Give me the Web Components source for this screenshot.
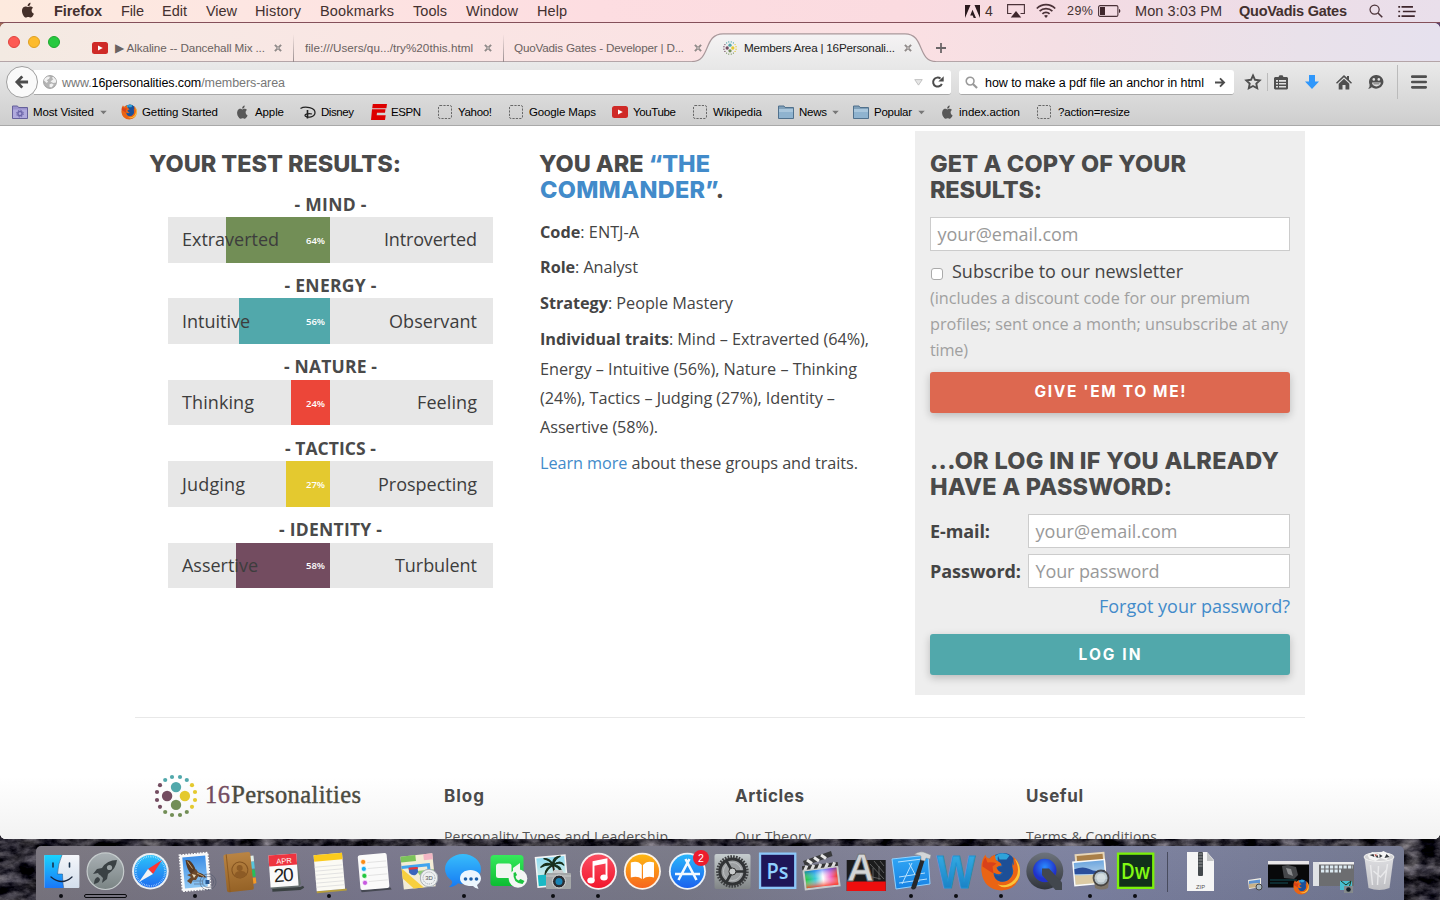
<!DOCTYPE html>
<html lang="en">
<head>
<meta charset="utf-8">
<title>Members Area | 16Personalities</title>
<style>
html,body{margin:0;height:100%;overflow:hidden}
body{font-family:"Liberation Sans",Arial,sans-serif}
</style>
</head>
<body>
<mac-desktop></mac-desktop>
<script>
const SVG={
apple:`<svg viewBox="0 0 14 17"><path fill="currentColor" d="M11.4 9c0-1.900 1.500-2.700 1.600-2.800-.9-1.300-2.200-1.500-2.700-1.500-1.200-.1-2.300.7-2.900.7s-1.500-.7-2.500-.7C3.600 4.700 2.400 5.500 1.700 6.600.3 9 1.300 12.600 2.700 14.600c.7 1 1.500 2 2.500 2s1.400-.6 2.600-.6 1.500.6 2.600.6 1.700-1 2.400-1.900c.7-1.100 1-2.200 1.100-2.200-.1-.1-2.500-1-2.500-3.500zM9.500 3.300C10 2.600 10.400 1.700 10.300.7c-.8 0-1.800.5-2.300 1.200-.5.6-1 1.500-.9 2.500.9 0 1.800-.5 2.400-1.100z"/></svg>`,
adobe:`<svg viewBox="0 0 15 13"><path fill="#2a1a1e" d="M0 0h5.500L0 13zM9.500 0H15v13zM7.500 4.800L11 13H8.700l-1-2.600H5.200z"/></svg>`,
airplay:`<svg viewBox="0 0 18 14"><path fill="none" stroke="#4a3238" stroke-width="1.100" d="M4.500 9.500H.6V.6h16.800v8.900h-3.900"/><path fill="#3e262c" d="M9 7l5.200 6.500H3.800z"/></svg>`,
wifi:`<svg viewBox="0 0 20 15"><g fill="none" stroke="#4a3238" stroke-width="1.700"><path d="M.8 5.500a13 13 0 0 1 18.400 0M3.600 8.200a9 9 0 0 1 12.800 0M6.400 10.900a5 5 0 0 1 7.200 0"/></g><path fill="#4a3238" d="M10 15l-2-2.200a3 3 0 0 1 4 0z"/></svg>`,
battery:`<svg viewBox="0 0 24 12"><rect x=".6" y=".6" width="19.300" height="10.800" rx="1.500" fill="none" stroke="#4a3238" stroke-width="1.100"/><path fill="#3e262c" d="M2 2h5v8H2zM21 4c1.800.3 1.800 3.700 0 4z"/></svg>`,
spot:`<svg viewBox="0 0 15 15"><circle cx="6" cy="6" r="4.900" fill="none" stroke="#4a3238" stroke-width="1.300"/><path d="M9.600 9.600l4.600 4.600" stroke="#4a3238" stroke-width="1.700"/></svg>`,
list:`<svg viewBox="0 0 19 12"><path d="M0 1h2M0 6h2M0 11h2M3.500 1H16M5 6h14M3.500 11H18" stroke="#3e262c" stroke-width="1.900"/></svg>`,
yt:`<svg viewBox="0 0 16 12"><rect width="16" height="12" rx="2.500" fill="#cf2a27"/><path fill="#fff" d="M6 3.500l4.800 2.500L6 8.500z"/></svg>`,
x:`<svg viewBox="0 0 9 9"><path d="M1 1l7 7M8 1L1 8" stroke="#8f8a89" stroke-width="2.200"/><path d="M4.500 3.500v2M3.500 4.500h2" stroke="#d8d0ce" stroke-width=".8"/></svg>`,
plus:`<svg viewBox="0 0 10 10"><path d="M5 0v10M0 5h10" stroke="#6b6668" stroke-width="1.800"/></svg>`,
globe:`<svg viewBox="0 0 15 15"><circle cx="7.500" cy="7.500" r="6.900" fill="#b5b5b5" stroke="#909090" stroke-width=".8"/><path fill="#f1f1f1" d="M2 3.500L5 1.500l2.500.5L6.500 4 4 5.500 5.500 7 4 8.500 1 6zM8 7l3-2.500L9.500 3 11 2l2.800 3 .3 3-3.100.5zM7 10l2.500-1 2 1.500L9 13.500 7 12.500z"/></svg>`,
back:`<svg viewBox="0 0 15 14"><path d="M7.800 1L2 7l5.800 6M2 7h12" fill="none" stroke="#4c4c4c" stroke-width="3"/></svg>`,
drop:`<svg viewBox="0 0 10 8"><path d="M.7.7h8.600L5 7z" fill="#e6e6e6" stroke="#bbb"/></svg>`,
reload:`<svg viewBox="0 0 12 12"><path d="M9.800 7.800A4.500 4.500 0 1 1 8.500 2.600" fill="none" stroke="#4c4c4c" stroke-width="2"/><path d="M6.300 5.600h5.400V.3z" fill="#4c4c4c"/></svg>`,
find:`<svg viewBox="0 0 14 14"><circle cx="5.500" cy="5.500" r="4.200" fill="none" stroke="#999" stroke-width="1.700"/><path d="M8.500 8.500l4.500 4.500" stroke="#999" stroke-width="2.300"/></svg>`,
go:`<svg viewBox="0 0 11 11"><path d="M5.500 1L10 5.500 5.500 10M10 5.500H0" fill="none" stroke="#4c4c4c" stroke-width="2"/></svg>`,
star:`<svg viewBox="0 0 16 16"><path d="M8 1.500l2 4.300 4.700.6-3.400 3.200.9 4.700L8 12l-4.200 2.300.9-4.700L1.300 6.400 6 5.800z" fill="none" stroke="#4f4f4f" stroke-width="1.900"/></svg>`,
clip:`<svg viewBox="0 0 14 15"><path fill="#4f4f4f" fill-rule="evenodd" d="M1 2h3.500L5.500.3h3L9.500 2H13l1 1v10.500l-1 1H1l-1-1V3zM2 5v1.700h2V5zm3 0v1.700h7V5zM2 8v1.600h2V8zm3 0v1.600h7V8zm-3 3v1.600h2V11zm3 0v1.600h7V11z"/></svg>`,
down:`<svg viewBox="0 0 14 14"><path fill="#2f97fb" d="M4 0h6v6.500h4L7 14 0 6.500h4z"/></svg>`,
home:`<svg viewBox="0 0 16 15"><path fill="#4f4f4f" d="M8 0l3 2.800V1h2v3.800l3 3-1 1-7-6.500-7 6.500-1-1z"/><path fill="#4f4f4f" d="M8 3.800l5.300 5V14.500H9.500v-4.500h-3v4.500H2.700V8.800z"/></svg>`,
smile:`<svg viewBox="0 0 16 15"><path fill="#4f4f4f" d="M8.300 0a7.300 6.800 0 1 1-4.600 12.200Q2 14 .2 13.600 2 12.400 1.600 9.800A7 7 0 0 1 8.300 0z"/><path fill="#dedede" d="M4 7.600h8.800a4.400 3.900 0 0 1-8.800 0z"/><path fill="#4f4f4f" d="M5.400 8.600h6v.6h-6z"/><circle cx="5.800" cy="4.400" r="1.300" fill="#dedede"/><circle cx="10.800" cy="4.400" r="1.300" fill="#dedede"/></svg>`,
menu:`<svg viewBox="0 0 16 14"><path d="M1.300 1.700h13.400M1.300 7h13.400M1.300 12.300h13.400" stroke="#4f4f4f" stroke-width="2.700" stroke-linecap="round"/></svg>`,
visited:`<svg viewBox="0 0 16 14"><path d="M.5 1h5l1 1.500h9v11H.5z" fill="#9a92cc" stroke="#65609b"/><path d="M1 4.500h14V13H1z" fill="#b0aadd"/><circle cx="8" cy="8.600" r="2.100" fill="none" stroke="#6a64a8" stroke-width="1.400"/><circle cx="8" cy="8.600" r="3.400" fill="none" stroke="#6a64a8" stroke-width="1" stroke-dasharray="1.400 1.270"/></svg>`,
folder:`<svg viewBox="0 0 16 14"><path d="M.5 1h5.500l1 1.500h8.500v11H.5z" fill="#7f9fb8" stroke="#50718d"/><path d="M1 4h14v9H1z" fill="#8fb3cf"/><path d="M1 4h14v3H1z" fill="#a9c6dc"/></svg>`,
tri:`<svg viewBox="0 0 8 5"><path d="M.3.500h7.400L4 4.500z" fill="#777"/></svg>`,
dash:`<svg viewBox="0 0 14 14"><rect x=".5" y=".5" width="13" height="13" rx="1.500" fill="none" stroke="#686868" stroke-dasharray="2.200 1.200"/></svg>`,
disney:`<svg viewBox="0 0 16 13"><path d="M.5 2.500C5-.3 15.500 1.500 15 7c-.4 4-7 5-9.500 3.300C3.500 8.500 8 6.800 12 8" fill="none" stroke="#222" stroke-width="1.300"/><path d="M7.500 4v8.500" stroke="#222" stroke-width="1.600"/></svg>`,
espn:`<svg viewBox="0 0 16 16"><path fill="#d00" d="M1.800 0H16l-.6 4.200H1.200zM1 5.300h13.500l-.5 3.500H6l-.3 2.400h9L14 16H0z"/></svg>`,
ff:`<svg viewBox="0 0 40 40"><circle cx="21" cy="18.500" r="16.500" fill="#1f5fa8"/><path d="M12 6Q21-1 30 6q-4 6-10 3-5 1-8-3z" fill="#31a8df"/><path d="M27 5q3 4 3 8 5 5 1 12-6 8-14 4-4-3-4-8 6 4 9-1-5 0-6-4 2-2 5-2 0-3-5-5-2-3-1-6-4 1-6 4Q5 6 5 3 0 9 1 20q2 18 20 19 18-1 18.500-20Q39 9 32 5q2 6 1 9-2-7-6-9z" fill="#ea6414"/><path d="M19 2Q28 0 33 7q-2 9-1 15-3 9-12 8-6-2-6-7 6 3 9-2-5 0-6-4 2-2 5-2 0-3-4-5-2-4 1-8z" fill="#1d4f97"/><path d="M17 3q6-3 12 1l-3 4-7 0z" fill="#2fa3da"/><path d="M34 7q7 12 0 21-7 8-17 5 6 5 14 1 9-5 8.500-15Q39 11 34 7z" fill="#fbc53a"/><path d="M2 15q0-6 3-9l2 5q5-1 9 1l-4 3 1 7-5-3z" fill="#d9411a"/></svg>`,
brand:`<svg viewBox="-22 -22 44 44"><g fill="#51a8ab"><circle cy="-8.900" r="5.200"/><circle cx="-4" cy="-19" r="2.100"/><circle cx="4" cy="-19" r="2.100"/><circle cx="-10.800" cy="-16" r="2.100"/><circle cx="10.800" cy="-16" r="2.100"/></g><g fill="#734c60"><circle cx="-8.900" r="5.200"/><circle cx="-19" cy="-4" r="2.100"/><circle cx="-19" cy="4" r="2.100"/><circle cx="-16" cy="-10.800" r="2.100"/><circle cx="-16" cy="10.800" r="2.100"/></g><g fill="#728e56"><circle cy="8.900" r="5.200"/><circle cx="-4" cy="19" r="2.100"/><circle cx="4" cy="19" r="2.100"/><circle cx="-10.800" cy="16" r="2.100"/><circle cx="10.800" cy="16" r="2.100"/></g><g fill="#e4c92f"><circle cx="8.900" r="5.200"/><circle cx="19" cy="-4" r="2.100"/><circle cx="19" cy="4" r="2.100"/><circle cx="16" cy="-10.800" r="2.100"/><circle cx="16" cy="10.800" r="2.100"/></g></svg>`
};
const D=(defs,body)=>`<svg viewBox="0 0 44.750 54"><defs>${defs}</defs>${body}</svg>`;
const lg=(id,a,b)=>`<linearGradient id="${id}" x2="0" y2="1"><stop stop-color="${a}"/><stop offset="1" stop-color="${b}"/></linearGradient>`;
const fox=SVG.ff.replace(/<\/?svg[^>]*>/g,'');
const palm=`<path d="M3 28Q12 22 27 25v5H3z" fill="#1bb8c4"/><path d="M15 26q3-9 1-15" stroke="#2a2012" stroke-width="2" fill="none"/><path d="M16 11Q10 5 3 12q7-3 13-1Q8 12 7 20q4-7 9-9 7 2 8 9 2-8-7-9 6-4 11 1Q25 5 17 10q2-6 8-8-8 0-9 7-3-6-9-6 7 2 9 8z" fill="#18301c" stroke="#18301c" stroke-width="1.200"/>`;
const DOCK={
finder:D(lg('a','#19d4fd','#1b77f8')+lg('b','#f4f6fa','#d3deec'),`<rect x="5.400" y="9" width="35" height="33" rx="1" fill="url(#b)"/><path d="M5.400 9H23q-4 9-4.500 19h5q0 8 1 14h-19z" fill="url(#a)"/><path d="M23 9q-4 9-4.500 19h5q0 8 1.200 14" fill="none" stroke="#1d4a7c" stroke-width=".5"/><path d="M14 17v4M30.500 17v4" stroke="#17324e" stroke-width="1.600" stroke-linecap="round"/><path d="M12 31q11 9 21 0" fill="none" stroke="#17243a" stroke-width="1.300" stroke-linecap="round"/>`),
launch:D(lg('a','#a9b0b4','#7a8484'),`<circle cx="22.400" cy="25.200" r="18.300" fill="url(#a)" stroke="#c6cccd" stroke-width="1.200"/><path d="M34 14q-10 0-15 8l-5 1-4 5 5-1q1 2 2 2l3 3-1 5 5-4 1-5q8-5 9-14z" fill="#3a4144"/><circle cx="26.500" cy="21.500" r="2.600" fill="#99a1a3"/><path d="M15 31q-4 1-4 7 6-1 6-5z" fill="#3a4144"/>`),
safari:D(lg('a','#2cc3fa','#1e6df0'),`<circle cx="22.400" cy="25.200" r="18.300" fill="#edf0f2"/><circle cx="22.400" cy="25.200" r="16.300" fill="url(#a)"/><circle cx="22.400" cy="25.200" r="14.700" fill="none" stroke="#d7f0ff" stroke-width="1.800" stroke-dasharray=".5 1.300"/><path d="M34 14L20 23l5 5z" fill="#f33"/><path d="M11 36l9-13 5 5z" fill="#f4f4f4"/>`),
mail:D(lg('a','#3d8ee6','#8fc8f4'),`<g transform="rotate(-5 22 25)"><rect x="8" y="8" width="28" height="36" fill="none" stroke="#fff" stroke-width="2" stroke-dasharray="1.700 1.200"/><rect x="8" y="8" width="28" height="36" fill="#f8f8f8"/><rect x="10.500" y="10.500" width="23" height="31" fill="url(#a)"/></g><path d="M12.500 14l4 .5q4 3 6 9l3 3q5 1 8 5l-7-.5-4-2.500-4 0q-5-5-6-14.500z" fill="#553822"/><path d="M14 35l4-4-4-2 5-2 4-4 3 6-3 5-3 0-2 4z" fill="#6b482a"/><path d="M14.500 15.500l5 7M24 27l7 3.500" stroke="#c9a877" stroke-width="1"/><path d="M19 28l4 1-2 3z" fill="#e6d9bd"/><g fill="none" stroke="#4e566b" opacity=".55"><circle cx="35" cy="36" r="8"/><circle cx="35" cy="36" r="5.500"/><path d="M20 35h10M21 38h9"/></g><rect x="32.500" y="34" width="4" height="4" fill="#28568e"/>`),
contacts:D(lg('a','#b98443','#956226'),`<g transform="rotate(-6 22 25)"><rect x="31" y="11" width="6" height="6" fill="#dfeee9"/><rect x="31" y="17" width="6" height="7" fill="#57c5dc"/><rect x="31" y="25" width="6" height="7" fill="#24c15b"/><rect x="31" y="33" width="6" height="6" fill="#f49a26"/><rect x="7" y="7" width="27" height="38" rx="2" fill="url(#a)"/><path d="M10 7v38" stroke="#8c5a22"/><circle cx="22" cy="24" r="8" fill="none" stroke="#82521f"/><circle cx="22" cy="22" r="3" fill="#8d5b25"/><path d="M16 30q0-5 6-5t6 5q-6 4-12 0" fill="#8d5b25"/></g>`),
cal:D('',`<g transform="rotate(-4 22 25)"><path d="M9 41l28 1 3-1 1 2-4 2H9z" fill="#3a4142"/><path d="M8 9h27l3 30-2 3H8z" fill="#66706f"/><rect x="7.500" y="8.500" width="28" height="32" fill="#fafafa"/><rect x="7.500" y="8.500" width="28" height="11" fill="#ee3440"/></g><text x="22" y="17.500" font-size="7.500" fill="#fff" text-anchor="middle" font-family="Liberation Sans" transform="rotate(-4 22 16)">APR</text><text x="22" y="35.500" font-size="19" fill="#222" text-anchor="middle" font-family="Liberation Sans" textLength="20" transform="rotate(-4 22 34)">20</text>`),
notes:D('',`<g transform="rotate(-5 22 25)"><path d="M8 44h30v2H8z" fill="#b59d3b"/><rect x="8" y="8" width="28.500" height="36" fill="#fbfaf4"/><rect x="8" y="8" width="28.500" height="6.500" fill="#fbcb1c"/><path d="M8 20h28M8 24h28M8 28h28M8 32h28M8 36h28M8 40h28" stroke="#ddd" stroke-width=".8"/></g>`),
rem:D('',`<g transform="rotate(-5 22 25)"><path d="M7 43h30l1 2H8z" fill="#454852"/><rect x="7" y="8" width="29" height="35" rx="2" fill="#fafafa"/><path d="M16 16h19M16 22h19M16 29h19M16 35h19" stroke="#ddd" stroke-width=".8"/><g stroke="#fff" stroke-width=".6"><circle cx="12" cy="15" r="2.500" fill="#fb8b14"/><circle cx="12" cy="22" r="2.500" fill="#1badf3"/><circle cx="12" cy="29" r="2.500" fill="#22c63f"/><circle cx="12" cy="36" r="2.500" fill="#c75ae0"/></g></g>`),
maps:D('',`<g transform="rotate(-6 20 25)"><rect x="5" y="9" width="32" height="33" fill="#f3ecd6"/><path d="M5 9h15v6H5z" fill="#7cc35a"/><path d="M28 9h9v6h-9z" fill="#f2b5c4"/><path d="M5 20h27v22" fill="none" stroke="#42a4ee" stroke-width="3"/><path d="M5 21l20 21H15L5 31z" fill="#f8cf3e"/><path d="M20 25h17v12H26z" fill="#8fca75"/><path d="M12 21h9v5q-4 6-9 0z" fill="#3b64bc"/><path d="M12 21h9v2h-9z" fill="#e33"/></g><circle cx="32" cy="32" r="8.700" fill="#eef0f1" stroke="#a9b0b8"/><circle cx="32" cy="32" r="6" fill="none" stroke="#99a1a8" stroke-dasharray="1 1"/><text x="32" y="34" font-size="6" fill="#555" text-anchor="middle" font-family="Liberation Sans">3D</text>`),
msg:D(lg('a','#38bdfb','#167bf4'),`<path d="M22 8c10 0 18 7 18 15s-8 15-18 15q-3 0-5-.7-4 4-9 3.700 4-3 3-6-7-5-7-12C4 15 12 8 22 8z" fill="url(#a)"/><path d="M29.500 24c6 0 10.500 4 10.500 8.500 0 3-2 5-4 6.500l1.500 4q-4-1-5.500-3c-7 .7-13-2.500-13-7.500s4.500-8.500 10.500-8.500z" fill="#edf6fe"/><g fill="#1d5fa8"><circle cx="24.500" cy="33" r="1.800"/><circle cx="30" cy="33" r="1.800"/><circle cx="35.500" cy="33" r="1.800"/></g>`),
face:D(lg('a','#36e95c','#0cbd32'),`<rect x="4.500" y="9" width="33" height="31" rx="3.500" fill="url(#a)"/><rect x="10" y="17.500" width="15.500" height="14.500" rx="2.500" fill="#f0f6f0"/><path d="M27 22l7-5v13l-7-3z" fill="#f0f6f0"/><circle cx="32" cy="32.500" r="9.300" fill="#f4f6f4"/><path d="M27.500 27q-1 10 9 11l2-3-4-2-2 1.500q-3-2-3-4l1.500-1.500-1.500-3z" fill="#1cc440"/>`),
iphoto:D(lg('a','#8fdcf3','#eef3df'),`<g transform="rotate(-5 22 25)"><rect x="5" y="9.500" width="31" height="31" fill="#f5f5f5"/><rect x="6.500" y="11" width="28" height="28" fill="url(#a)"/><path d="M6.500 28h28v11h-28z" fill="#1bb8c4"/><g transform="translate(7 9) scale(.95)">${palm}</g></g><rect x="15" y="27" width="25" height="16" rx="1" fill="#a4a7a8"/><path d="M21 27l2-3h8l2 3z" fill="#c8cacb"/><path d="M15 30h25" stroke="#c8c9c9"/><circle cx="28" cy="35.500" r="6.500" fill="#2a2e33" stroke="#d8d9da"/><circle cx="28" cy="35.500" r="3.500" fill="#1a84b5"/>`),
itunes:D(lg('a','#fb4e62','#f2162d'),`<circle cx="22.400" cy="25.200" r="18.500" fill="#f8f1f2"/><circle cx="22.400" cy="25.200" r="16.700" fill="url(#a)"/><path d="M17.500 34.500V16l13-2.500v17" fill="none" stroke="#fff" stroke-width="1.900"/><path d="M17 15.800l14-2.800v4.300l-14 2.800z" fill="#fff"/><ellipse cx="15" cy="34.500" rx="3.700" ry="3" fill="#fff"/><ellipse cx="28" cy="31.500" rx="3.700" ry="3" fill="#fff"/>`),
ibooks:D(lg('a','#fdb713','#f7661d'),`<circle cx="22.400" cy="25.200" r="18.500" fill="#fbf4ea"/><circle cx="22.400" cy="25.200" r="16.700" fill="url(#a)"/><path d="M21.800 19q-4-5-11-2.500v15q7-2 11 1.500zM23 19q4-5 11-2.500v15q-7-2-11 1.500z" fill="#fff"/>`),
appstore:D(lg('a','#29b6fa','#1b62ee'),`<circle cx="22.400" cy="25.200" r="18.500" fill="#eef3f8"/><circle cx="22.400" cy="25.200" r="16.700" fill="url(#a)"/><path d="M24.500 13L13.500 34M20.500 13L31.500 34M10 28h25" stroke="#f4faff" stroke-width="2.600"/><circle cx="36" cy="12" r="8" fill="#ec1c2c"/><text x="36" y="15.700" font-size="10.500" fill="#fff" text-anchor="middle" font-family="Liberation Sans">2</text>`),
prefs:D(lg('a','#c6cdcf','#818586'),`<rect x="4.500" y="8" width="36" height="35" rx="2" fill="url(#a)"/><circle cx="22.400" cy="25.500" r="14.800" fill="none" stroke="#3f4143" stroke-width="3" stroke-dasharray="1.700 1.100"/><circle cx="22.400" cy="25.500" r="12.500" fill="#9c9fa1" stroke="#313335" stroke-width="3"/><circle cx="22.400" cy="25.500" r="9" fill="none" stroke="#bcbfc1" stroke-width="1"/><path d="M22.400 25.500h12M22.400 25.500l-6 10.500M22.400 25.500l-6-10.500" stroke="#303335" stroke-width="2.600"/><circle cx="22.400" cy="25.500" r="3.500" fill="#c9cccd" stroke="#333"/>`),
ps:D('',`<rect x="3.900" y="6.500" width="37.500" height="36.500" fill="#8cc7f9"/><rect x="6.200" y="8.800" width="32.900" height="31.900" fill="#1e1658"/><text x="22.600" y="33" font-size="21" font-weight="600" fill="#8fd0ff" text-anchor="middle" font-family="Open Sans" textLength="22" lengthAdjust="spacingAndGlyphs">Ps</text>`),
fcp:D(`<linearGradient id="a"><stop stop-color="#25c43c"/><stop offset=".3" stop-color="#35c8d8"/><stop offset=".55" stop-color="#fff"/><stop offset=".8" stop-color="#f163c0"/><stop offset="1" stop-color="#ef3b20"/></linearGradient><linearGradient id="b" x2="0" y2="1"><stop stop-color="#0040ff" stop-opacity=".5"/><stop offset=".5" stop-color="#fff" stop-opacity="0"/><stop offset="1" stop-color="#fb3a22" stop-opacity=".85"/></linearGradient>`,`<path d="M4 15L32 5l1.500 5L6 20z" fill="#393a3c"/><path d="M8 14l5 3.500M15 11.500l5 3.500M22 9l5 3.500" stroke="#e9e9e9" stroke-width="3"/><g transform="rotate(-7 22 28)"><path d="M4 18h36v5H4z" fill="#333"/><path d="M9 18l-3 5M16 18l-3 5M23 18l-3 5M30 18l-3 5M37 18l-3 5" stroke="#ddd" stroke-width="3"/><rect x="4" y="22" width="36" height="20.500" fill="#c9cacb"/><rect x="6" y="23.500" width="32" height="17" fill="url(#a)"/><rect x="6" y="23.500" width="32" height="17" fill="url(#b)"/></g>`),
acad:D('',`<rect x="2.700" y="14" width="39" height="31" fill="#1b1b1c"/><rect x="2.700" y="35.500" width="39" height="9.500" fill="#ee0e0e"/><path d="M26 18l14 15M30 15l10 12M36 15l4 5M24 30l13 3M29 22v13M35 20v14" stroke="#777" stroke-width=".7"/><text x="18" y="35.500" font-size="39" font-weight="800" font-family="Liberation Sans" fill="#d4d5d6" stroke="#6d6e70" stroke-width=".8" text-anchor="middle" textLength="27" lengthAdjust="spacingAndGlyphs" transform="skewX(-3)">A</text>`),
xcode:D(lg('a','#32a9f6','#1681e3'),`<path d="M3 13l36-4 2 29-34 5z" fill="url(#a)"/><path d="M3 13l36-4 2 29-34 5z" fill="none" stroke="#8fd1ff"/><path d="M9 16l24-3M10 37l28-4M20 17l10 19M23 17L13 38M10 31l26-4" stroke="#b6e1ff" stroke-width="1" fill="none"/><path d="M32 12l4 1-9 29q-3 3-5 0z" fill="#26282b"/><path d="M25 8.500q6-4.500 12-1.500l5 2-1 4-4-1-1 3-4-1 0-4q-3-1.500-7-1.500z" fill="#d3d6d8" stroke="#85898d" stroke-width=".5"/>`),
word:D(lg('a','#3ab5ea','#1377be'),`<text x="22" y="42" font-size="46" font-weight="700" font-family="Liberation Sans" fill="url(#a)" stroke="#1e93d3" stroke-width="1" text-anchor="middle" textLength="38" lengthAdjust="spacingAndGlyphs">W</text>`),
firefox:D('',`<g transform="translate(2.500 5.500)">${fox}</g>`),
qt:D(`<radialGradient id="a" cy=".35"><stop stop-color="#2a8cff"/><stop offset="1" stop-color="#2131c9"/></radialGradient>`+lg('b','#6d737c','#30343b'),`<circle cx="21.800" cy="25" r="18.500" fill="url(#b)"/><circle cx="21.800" cy="24.500" r="11.700" fill="url(#a)"/><path d="M19 22.500h7l13 14v7.500h-6.500L19 29z" fill="#42474e"/>`),
preview:D(lg('a','#6fa7df','#d8e8f0'),`<g transform="rotate(-5 22 25)"><rect x="8" y="7" width="30" height="26" fill="#e7d6b8"/><path d="M10 9h26v8H10z" fill="#a97f48"/><rect x="5" y="14" width="33" height="25" fill="#fafafa"/><rect x="6.500" y="15.500" width="30" height="22" fill="url(#a)"/><path d="M6.500 22q9-3 15 1t15 2v4l-30-2z" fill="#2a4f9c"/><path d="M6.500 28q14 2 30 0v9.500h-30z" fill="#dccba4"/></g><path d="M26 33h15l-1 9q-6 3-13 0z" fill="#7d7468"/><circle cx="33" cy="32" r="7.500" fill="#b9c9d2" opacity=".85" stroke="#3d3c3c" stroke-width="1.800"/><circle cx="33" cy="32" r="4.500" fill="#dde5e8" opacity=".7"/>`),
dw:D('',`<rect x="3.900" y="6.500" width="37.500" height="36.500" fill="#7bf10a"/><rect x="6.200" y="8.800" width="32.900" height="31.900" fill="#11301a"/><text x="22.600" y="32.500" font-size="21" font-weight="600" fill="#82f913" text-anchor="middle" font-family="Open Sans" textLength="29" lengthAdjust="spacingAndGlyphs">Dw</text>`),
zip:D('',`<path d="M9 6h20l7 8v31H9z" fill="#f5f5f5"/><path d="M29 6v9h7z" fill="#c4c6c7"/><rect x="20" y="6" width="5" height="24" rx="1" fill="#44494d"/><path d="M20.500 8h4M20.500 11h4M20.500 14h4M20.500 17h4M20.500 20h4" stroke="#aaa" stroke-width=".8"/><text x="22.500" y="42.500" font-size="5.800" fill="#555" text-anchor="middle" font-family="Liberation Sans">ZIP</text>`),
trash:D(lg('a','#e2e2e4','#c3c3c6'),`<g transform="translate(-3.500 0)"><path d="M8 12h29l-4 30q-10 4-21 0z" fill="url(#a)" opacity=".95"/><ellipse cx="22.500" cy="11" rx="15" ry="4.500" fill="#d4d4d6" stroke="#f2f2f2"/><path d="M11 9l5-3 5 2 6-3 7 4-4 5-6-2-5 3-6-2z" fill="#f5f5f5"/><path d="M13 9l4-1 1 3zM23 8l3 2-3 2zM30 8l3 3-5 1zM19 11l2-2 1 3z" fill="#34373c"/><path d="M18 8l3 1-2 1.500z" fill="#b34a3c"/><path d="M14 19l2 20M22 20l-1 19M31 18l-3 20M17 25l7 6 6-7" stroke="#efeff0" stroke-width="1.500" opacity=".8" fill="none"/></g>`)
};
const define=(name,html)=>customElements.define(name,class extends HTMLElement{
  constructor(){super();this.attachShadow({mode:'open'})}
  connectedCallback(){if(!this.shadowRoot.innerHTML)this.shadowRoot.innerHTML=typeof html==='function'?html(this):html}
});
/* compact builder: text of a given width, with its distance from the previous item */
const T=(gap,w,text,css='')=>`<fit-text w="${w}" style="margin-left:${gap}px;${css}">${text}</fit-text>`;
const I=(gap,name,w,h,css='')=>`<ui-icon name="${name}" style="margin-left:${gap}px;width:${w}px;height:${h}px;${css}"></ui-icon>`;

define('ui-icon',el=>`<style>:host{display:block;flex:none}svg{display:block;width:100%;height:100%;overflow:visible}</style>${SVG[el.getAttribute('name')]}`);

define('mac-desktop',`<style>
:host{display:grid;grid-template-rows:23px 816px 61px;width:1440px;height:900px;overflow:hidden;position:relative;background:linear-gradient(90deg,#a06a58,#8a4f5a 50%,#5d4470)}
.rock{position:absolute;left:0;top:830px;width:1440px;height:70px;display:block}
menu-bar,browser-window,mac-dock{position:relative}
</style>
<svg class="rock"><filter id="r" x="0" y="0" width="100%" height="100%" color-interpolation-filters="sRGB"><feTurbulence type="fractalNoise" baseFrequency=".05 .09" numOctaves="5" seed="8"/><feColorMatrix values=".95 0 0 0 -.3  .93 0 0 0 -.3  .93 .05 0 0 -.29  0 0 0 0 1"/></filter><rect width="1440" height="70" filter="url(#r)"/></svg>
<menu-bar></menu-bar><browser-window></browser-window><mac-dock></mac-dock>`);

define('menu-bar',`<style>
:host{display:flex;align-items:center;height:22px;border-bottom:1px solid #84505a;background:linear-gradient(90deg,#fdeade 0,#fde6e2 240px,#fddde1 600px,#fbdbe0 900px,#f0dce5 1180px,#e9dfeb 1440px);font-size:14.500px;line-height:22px;color:#43302f;box-sizing:content-box}
</style>
${I(21,'apple',13,16,'color:#45302a;margin-top:-2px')}${T(20,48,'Firefox','font-weight:700')}${T(19,23,'File')}${T(18,25,'Edit')}${T(19,31,'View')}${T(18,46,'History')}${T(19,74,'Bookmarks')}${T(19,34,'Tools')}${T(19,52,'Window')}${T(19,30,'Help')}
${I(398,'adobe',15,13)}${T(5,7,'4','font-size:14px')}${I(15,'airplay',18,14)}${I(11,'wifi',20,15,'margin-top:-2px')}${T(11,26,'29%','font-size:12.5px')}${I(5,'battery',24,12)}${T(13,87,'Mon 3:03 PM')}${T(17,108,'QuoVadis Gates','font-weight:700')}${I(22,'spot',14,14)}${I(15,'list',18,11)}`);

define('browser-window',`<style>
:host{display:grid;grid-template-rows:39px 37px 27px 713px;width:1440px;height:816px;border-radius:6px;overflow:hidden;background:#fff}
</style><tab-strip></tab-strip><nav-bar></nav-bar><bookmark-bar></bookmark-bar><members-page></members-page>`);

define('tab-strip',`<style>
:host{display:flex;align-items:center;height:39px;box-sizing:border-box;padding-top:12px;font-size:11.700px;line-height:26px;color:#6a6261;position:relative;border-bottom:1px solid #b4a5a8;background:linear-gradient(90deg,#f3eae2 0,#f7e9e4 150px,#fae5e4 450px,#fbe0e3 900px,#f4dfe4 1060px,#e9e1ea 1300px,#e6e1ee)}
.l{flex:none;width:10px;height:10px;border-radius:50%;border:1px solid #e0443e;background:#fd5b54;margin:-12px 8px 0 0}
.sep{flex:none;width:1px;height:29px;background:linear-gradient(#c8bcbb00,#94898b)}
.active{position:absolute;left:692px;top:10px;width:244px;height:29px}
fit-text,ui-icon{position:relative}
</style>
<svg class="active" viewBox="0 0 244 29"><defs><linearGradient id="g" x2="0" y2="1"><stop stop-color="#f5f3f4"/><stop offset="1" stop-color="#e9e9e9"/></linearGradient></defs><path d="M0 28.500C19 28.500 11 .8 31 .8H213C233 .8 225 28.500 244 28.500V30H0z" fill="url(#g)"/><path d="M0 28.500C19 28.500 11 .8 31 .8H213C233 .8 225 28.500 244 28.500" fill="none" stroke="#a9989b" stroke-width="1.200"/></svg>
<div class="l" style="margin-left:8px"></div><div class="l" style="background:#fdbb2d;border-color:#dfa023"></div><div class="l" style="background:#27c93f;border-color:#1da82e"></div>
${I(24,'yt',16,12)}${T(7,150,'<span style="font:12px DejaVu Sans">▶</span> Alkaline -- Dancehall Mix ...')}${I(9,'x',8,8)}<div class="sep" style="margin-left:11px"></div>
${T(11,168,'file:///Users/qu.../try%20this.html')}${I(11,'x',8,8)}<div class="sep" style="margin-left:11px"></div>
${T(10,170,'QuoVadis Gates - Developer | D...')}${I(10,'x',8,8)}
${I(21,'brand',14,14)}${T(7,151,'Members Area | 16Personali...','color:#222')}${I(9,'x',8,8)}${I(24,'plus',10,10)}`);

define('nav-bar',`<style>
:host{display:flex;align-items:center;height:37px;box-sizing:border-box;padding-top:3px;font-size:12.5px;background:linear-gradient(#eaeaea,#d9d9d9);position:relative}
.back{flex:none;width:30px;height:30px;border:1px solid #9f9f9f;border-radius:50%;background:#fafafa;margin-left:6px;display:flex;align-items:center;justify-content:center;z-index:1}
.f{flex:none;height:24px;background:#fff;border-bottom:1px solid #a9a9a9;display:flex;align-items:center;line-height:26px;box-sizing:content-box;margin-top:1px;border-radius:0 3px 3px 0}
.f fit-text{margin-top:1px}
.v{flex:none;width:1px;background:#bbb}
</style>
<div class="back"><ui-icon name="back" style="width:14px;height:14px"></ui-icon></div>
<div class="f" style="width:917px;margin-left:-4px">${I(9,'globe',14,14)}${T(5,223,'<span style="color:#777">www.</span><span style="color:#000">16personalities.com</span><span style="color:#777">/members-area</span>')}${I(629,'drop',9,7)}${I(9,'reload',12,12)}</div>
<div class="f" style="width:275px;margin-left:8px;border-radius:3px">${I(6,'find',13,13)}${T(7,219,'how to make a pdf file an anchor in html','color:#000')}${I(11,'go',10,11)}</div>
${I(11,'star',16,16)}<div class="v" style="height:18px;margin-left:6px"></div>${I(6,'clip',14,15)}${I(17,'down',14,14)}${I(17,'home',16,15)}${I(16,'smile',16,15)}<div class="v" style="height:34px;margin-left:13px"></div>${I(13,'menu',16,14)}`);

define('bookmark-bar',`<style>:host{display:flex;align-items:center;height:27px;box-sizing:border-box;border-bottom:1px solid #a9a9a9;font-size:11.5px;line-height:26px;color:#000;background:linear-gradient(#d9d9d9,#cecece)}</style>
${I(12,'visited',16,14)}${T(5,61,'Most Visited')}${I(6,'tri',7,5)}
${I(14,'ff',16,16)}${T(5,76,'Getting Started')}
${I(18,'apple',12,14,'color:#585858')}${T(7,29,'Apple')}
${I(16,'disney',16,13)}${T(5,33,'Disney')}
${I(17,'espn',16,16)}${T(4,30,'ESPN')}
${I(17,'dash',14,14)}${T(6,34,'Yahoo!')}
${I(17,'dash',14,14)}${T(6,67,'Google Maps')}
${I(16,'yt',16,12)}${T(5,43,'YouTube')}
${I(17,'dash',14,14)}${T(6,49,'Wikipedia')}
${I(16,'folder',16,14)}${T(5,28,'News')}${I(5,'tri',7,5)}
${I(14,'folder',16,14)}${T(5,38,'Popular')}${I(6,'tri',7,5)}
${I(16,'apple',12,14,'color:#585858')}${T(6,61,'index.action')}
${I(17,'dash',14,14)}${T(7,72,'?action=resize')}`);

define('page-heading',`<style>:host{display:block;font:800 23.500px/26px Inter,sans-serif;color:#4a4a4a}</style><slot></slot>`);
define('trait-bar',el=>{const a=n=>el.getAttribute(n);return `<style>
:host{display:block;height:81.400px;width:325px;margin-left:18px}
.t{height:35.500px;line-height:23px;padding-top:11px;box-sizing:border-box;display:flex;justify-content:center;font-weight:700;font-size:17.500px;color:#4a4a4a}
.b{height:45.700px;background:linear-gradient(90deg,#e7e7e7 calc(162px - ${a('fill')}px),${a('color')} 0,${a('color')} 162px,#e7e7e7 0);display:flex;align-items:center;font-size:18px;line-height:24px;padding-bottom:1px;box-sizing:border-box;color:#3d3d3d}
.p{font-size:9.500px;font-weight:600;color:#fff;margin-top:3px}
.r{margin-left:auto;margin-right:16px}
</style><div class="t">${T(0,a('tw'),'- '+a('name')+' -')}</div><div class="b">${T(14,a('lw'),a('left'))}<fit-text class="p" w="19" style="margin-left:${124-a('lw')}px">${a('pct')}%</fit-text><fit-text class="r" w="${a('rw')}">${a('right')}</fit-text></div>`});
define('text-field',`<style>:host{display:flex;align-items:center;box-sizing:border-box;height:34px;border:1px solid #ccc;background:#fff;color:#999;font-size:18px;padding-left:6.500px}</style><slot></slot>`);
define('action-button',`<style>:host{display:flex;align-items:center;justify-content:center;height:41px;border-radius:3px;color:#fff;font:700 15.500px/39px Inter,sans-serif;box-shadow:0 3px 8px rgba(0,0,0,.22);padding-bottom:2px;box-sizing:border-box}</style><slot></slot>`);
define('results-panel',`<style>:host{display:block;padding:24.500px 15px 0}page-heading{margin-bottom:5px}</style>
<page-heading>${T(-1,252,'YOUR TEST RESULTS:')}</page-heading>
<trait-bar name="MIND" tw="72" left="Extraverted" lw="97" right="Introverted" rw="93" pct="64" fill="104" color="#728e56"></trait-bar>
<trait-bar name="ENERGY" tw="92" left="Intuitive" lw="68" right="Observant" rw="88" pct="56" fill="91" color="#51a8ab"></trait-bar>
<trait-bar name="NATURE" tw="93" left="Thinking" lw="72" right="Feeling" rw="60" pct="24" fill="39" color="#ec4639"></trait-bar>
<trait-bar name="TACTICS" tw="91" left="Judging" lw="63" right="Prospecting" rw="99" pct="27" fill="44" color="#e4c92f"></trait-bar>
<trait-bar name="IDENTITY" tw="103" left="Assertive" lw="76" right="Turbulent" rw="82" pct="58" fill="94" color="#734c60"></trait-bar>`);
define('type-panel',`<style>:host{display:block;padding:24.500px 15px 0;font-size:16.250px;line-height:29.330px;color:#444}
p{margin:0 0 6.670px}fit-text{display:block}page-heading{margin-bottom:15px}</style>
<page-heading>${T(-1,171,'YOU ARE <span style="color:#428bca">“THE</span>')}${T(0,184,'<span style="color:#428bca">COMMANDER”</span>.')}</page-heading>
<p>${T(0,99,'<b>Code</b>: ENTJ-A')}</p><p>${T(0,98,'<b>Role</b>: Analyst')}</p><p>${T(0,193,'<b>Strategy</b>: People Mastery')}</p>
<p>${T(0,329,'<b>Individual traits</b>: Mind – Extraverted (64%),')}${T(0,317,'Energy – Intuitive (56%), Nature – Thinking')}${T(0,295,'(24%), Tactics – Judging (27%), Identity –')}${T(0,118,'Assertive (58%).')}</p>
<p>${T(0,318,'<span style="color:#428bca">Learn more</span> about these groups and traits.')}</p>`);
define('login-panel',`<style>:host{display:block;box-sizing:border-box;margin-top:5px;height:564px;background:#eee;padding:19.500px 15px 0;font-size:18px;color:#444}
page-heading fit-text,.s fit-text{display:block}
.c{display:flex;align-items:center;height:26px;line-height:24px;margin-top:8px}
.c fit-text{margin-top:-2px}
.box{width:10px;height:10px;border:1px solid #aaa;border-radius:3px;background:#fff;margin:4px 9px 0 1px}
.s{font-size:16.250px;line-height:26px;color:#a0a0a0}
.g{display:grid;grid-template-columns:98px 262px;row-gap:6px;align-items:center;margin-top:14px}
.g b{font-size:18px}
.f{display:flex;justify-content:flex-end;color:#428bca;line-height:26px;margin:5px 0 15px}
</style>
<page-heading>${T(0,256,'GET A COPY OF YOUR')}${T(0,112,'RESULTS:')}</page-heading>
<text-field style="margin-top:14.500px">${T(0,141,'your@email.com')}</text-field>
<div class="c"><div class="box"></div>${T(0,231,'Subscribe to our newsletter')}</div>
<div class="s">${T(0,320,'(includes a discount code for our premium')}${T(0,358,'profiles; sent once a month; unsubscribe at any')}${T(0,38,'time)')}</div>
<action-button style="background:#dd6850;margin:9px 0 35px">${T(0,151,"GIVE 'EM TO ME!")}</action-button>
<page-heading>${T(0,349,'...OR LOG IN IF YOU ALREADY')}${T(0,242,'HAVE A PASSWORD:')}</page-heading>
<div class="g"><b>${T(0,60,'E-mail:')}</b><text-field>${T(0,142,'your@email.com')}</text-field><b>${T(0,91,'Password:')}</b><text-field>${T(0,124,'Your password')}</text-field></div>
<div class="f">${T(0,191,'Forgot your password?')}</div>
<action-button style="background:#51a8ab;padding-bottom:1px">${T(-1,62,'LOG IN')}</action-button>`);
define('footer-column',el=>`<style>:host{display:block;width:291px;flex:none;font-size:14px;line-height:26px;color:#555}
h4{margin:0 0 15px;font:700 17px/26px Inter,sans-serif;color:#4a4a4a}fit-text{display:block}</style>
<h4>${T(0,el.getAttribute('hw'),el.getAttribute('head'))}</h4><slot></slot>`);
define('page-footer',`<style>:host{display:flex;height:122px;margin-top:22px;padding:0 135px;box-sizing:border-box;background:linear-gradient(#fff 60px,#f2f2f2);position:relative}
hr{position:absolute;left:135px;width:1170px;top:0;margin:0;border:0;border-top:1px solid #e8e8e8}
.logo{display:flex;width:309px;flex:none;height:44px;margin-top:57px;align-items:center}
footer-column{margin-top:66px}</style><hr>
<div class="logo">${I(19,'brand',44,44)}<fit-text w="156" style="margin:-2px 0 0 7px;font:24.500px/30px Liberation Serif,serif;color:#4a4a40;-webkit-text-stroke:.4px #4a4a40"><span style="color:#734c60;-webkit-text-stroke-color:#734c60">16</span><span style="padding-left:1px">Personalities</span></fit-text></div>
<footer-column head="Blog" hw="40">${T(0,224,'Personality Types and Leadership')}</footer-column>
<footer-column head="Articles" hw="69">${T(0,76,'Our Theory')}</footer-column>
<footer-column head="Useful" hw="57">${T(0,131,'Terms &amp; Conditions')}</footer-column>`);
define('members-page',`<style>:host{display:block;height:713px;overflow:hidden;font-family:"Open Sans",sans-serif;background:#fff}
.row{display:grid;grid-template-columns:390px 390px 390px;margin:0 135px;height:569px}</style>
<div class="row"><results-panel></results-panel><type-panel></type-panel><login-panel></login-panel></div><page-footer></page-footer>`);

define('dock-icon',el=>`<style>:host{display:block;flex:none;width:44.750px;height:54px;position:relative}svg{display:block;width:44.750px;height:54px;overflow:visible}
i{position:absolute;left:20.400px;top:48px;width:4px;height:4px;border-radius:50%;background:#0c0d12}
:host([launching]) i{left:1px;width:41px;height:2px;border:1px solid #08090c;border-radius:2px;background:none;top:48px}
i{display:none}:host([running]) i,:host([launching]) i{display:block}</style>${DOCK[el.getAttribute('name')]}<i></i>`);
define('mini-window',el=>`<style>:host{display:block;flex:none;width:41px;height:27px;margin-top:2px}svg{display:block;overflow:visible}</style>`+(el.getAttribute('kind')==='web'
?`<svg width="41" height="34"><rect width="41" height="26.500" fill="#08090a"/><rect width="41" height="3.500" fill="#e8e6e8"/><path d="M14 5l6-1 8 2 2 8-4 4-10-1z" fill="#45474a"/><path d="M18 7l5 1 2 7-5-2z" fill="#8a8c8e"/><path d="M2 19h27M2 22h18" stroke="#176069" stroke-width=".8"/><g transform="translate(25 18) scale(.4)">${fox}</g></svg>`
:`<svg width="41" height="34"><rect y="1" width="41" height="24" fill="#6c6d70"/><rect y="1" width="41" height="2.500" fill="#eee"/><rect y="1" width="6" height="24" fill="#e0e2e5"/><path d="M8 6h32M8 10h20" stroke="#dce9f0" stroke-width="2.800" stroke-dasharray="3.200 1.300"/><rect x="27" y="20" width="12" height="9" fill="#49bfd0"/><path d="M28 20l5 4 5-4-2 7" stroke="#173820" fill="none"/><rect x="31" y="25" width="9" height="7" fill="#858a8c"/><circle cx="35.500" cy="28.500" r="2.300" fill="#111c24"/></svg>`));
define('mac-dock',`<style>:host{display:block;padding-top:7px}
.d{display:flex;align-items:center;height:54px;width:1368px;margin-left:36px;border-radius:5px 5px 0 0;box-sizing:border-box;padding-left:2.600px;background:linear-gradient(rgba(255,255,255,.04),rgba(50,60,100,.04)),linear-gradient(90deg,#77737c,#77758a 350px,#777785 640px,#7e7f98 900px,#7a7f9e 1050px,#70758e 1368px)}
.sep{flex:none;width:1px;height:40px;margin:-2px 10px 0 9.500px;background:#484b5e}
.mini{width:14px;height:14px;margin:21px 6px 0 25px;flex:none}
mini-window+mini-window{margin-left:4px}</style>
<div class="d">${'finder* launch! safari mail* contacts cal notes* rem maps msg* face iphoto* itunes* ibooks appstore prefs ps fcp acad xcode* word* firefox* qt preview* dw*'.split(' ').map(n=>`<dock-icon name="${n.replace(/\W/,'')}"${n.endsWith('*')?' running':''}${n.endsWith('!')?' launching':''}></dock-icon>`).join('')}
<div class="sep"></div><dock-icon name="zip"></dock-icon>
<svg class="mini" viewBox="0 0 14 14" style="overflow:visible"><path d="M0 3l13-2v9L1 12z" fill="#f3efe6"/><path d="M1 4l11-1.500V6L1 7z" fill="#5e92d0"/><path d="M1 7l11-1v4L1 11z" fill="#c8b187"/><circle cx="11" cy="10" r="3" fill="#aab8c0" stroke="#444"/></svg>
<mini-window kind="web"></mini-window><mini-window kind="files" style="margin-left:4px"></mini-window><dock-icon name="trash" style="margin-left:6px"></dock-icon></div>`);

/* Text set to a measured width by adjusting its tracking. */
customElements.define('fit-text',class extends HTMLElement{
  constructor(){super();this.attachShadow({mode:'open'}).innerHTML='<style>:host{display:block;flex:none;white-space:nowrap}span{display:inline-block;white-space:pre}</style><span><slot></slot></span>'}
  connectedCallback(){
    const w=+this.getAttribute('w'),s=this.shadowRoot.querySelector('span'),n=this.textContent.length;
    const nat=s.getBoundingClientRect().width;
    if(nat&&n>1)s.style.letterSpacing=(w-nat)/(n-1)+'px';
    this.style.width=w+'px';
  }
});
</script>
</body>
</html>
